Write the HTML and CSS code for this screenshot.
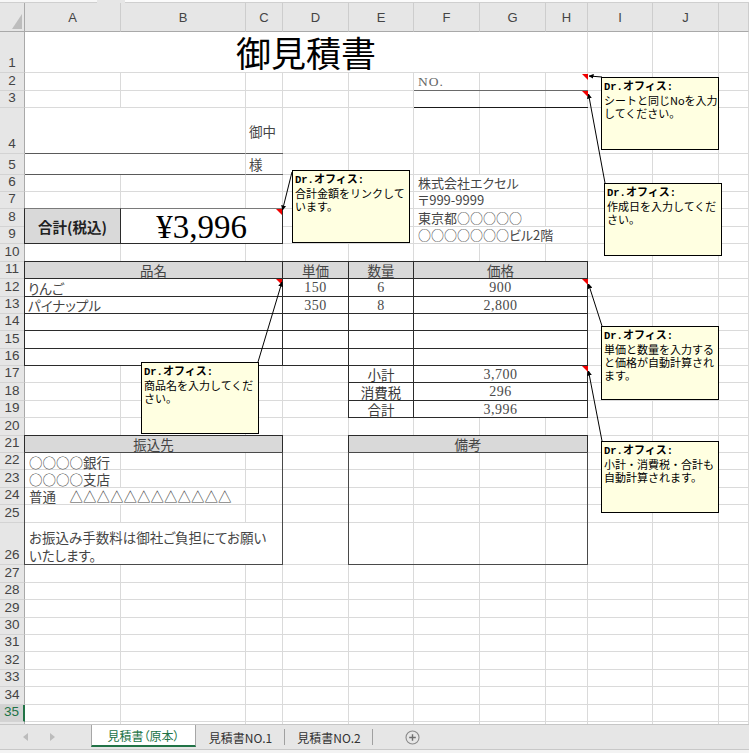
FILE: index.html
```html
<!DOCTYPE html>
<html lang="ja">
<head>
<meta charset="utf-8">
<title>御見積書</title>
<link rel="stylesheet" href="styles.css">
</head>
<body>
<div class="app">
  <div class="fbar"><span class="fb-a"></span><span class="fb-gap"></span><span class="fb-b"></span></div>
  <div class="sheet">
    <div class="gl">
      <div class="corner"></div>
      <div class="ch">A</div><div class="ch">B</div><div class="ch">C</div><div class="ch">D</div><div class="ch">E</div><div class="ch">F</div><div class="ch">G</div><div class="ch">H</div><div class="ch">I</div><div class="ch">J</div><div class="ch"></div>
      <b>1</b><i></i><i></i><i></i><i></i><i></i><i></i><i></i><i></i><i></i><i></i><i></i>
      <b>2</b><i></i><i></i><i></i><i></i><i></i><i></i><i></i><i></i><i></i><i></i><i></i>
      <b>3</b><i></i><i></i><i></i><i></i><i></i><i></i><i></i><i></i><i></i><i></i><i></i>
      <b>4</b><i></i><i></i><i></i><i></i><i></i><i></i><i></i><i></i><i></i><i></i><i></i>
      <b>5</b><i></i><i></i><i></i><i></i><i></i><i></i><i></i><i></i><i></i><i></i><i></i>
      <b>6</b><i></i><i></i><i></i><i></i><i></i><i></i><i></i><i></i><i></i><i></i><i></i>
      <b>7</b><i></i><i></i><i></i><i></i><i></i><i></i><i></i><i></i><i></i><i></i><i></i>
      <b>8</b><i></i><i></i><i></i><i></i><i></i><i></i><i></i><i></i><i></i><i></i><i></i>
      <b>9</b><i></i><i></i><i></i><i></i><i></i><i></i><i></i><i></i><i></i><i></i><i></i>
      <b>10</b><i></i><i></i><i></i><i></i><i></i><i></i><i></i><i></i><i></i><i></i><i></i>
      <b>11</b><i></i><i></i><i></i><i></i><i></i><i></i><i></i><i></i><i></i><i></i><i></i>
      <b>12</b><i></i><i></i><i></i><i></i><i></i><i></i><i></i><i></i><i></i><i></i><i></i>
      <b>13</b><i></i><i></i><i></i><i></i><i></i><i></i><i></i><i></i><i></i><i></i><i></i>
      <b>14</b><i></i><i></i><i></i><i></i><i></i><i></i><i></i><i></i><i></i><i></i><i></i>
      <b>15</b><i></i><i></i><i></i><i></i><i></i><i></i><i></i><i></i><i></i><i></i><i></i>
      <b>16</b><i></i><i></i><i></i><i></i><i></i><i></i><i></i><i></i><i></i><i></i><i></i>
      <b>17</b><i></i><i></i><i></i><i></i><i></i><i></i><i></i><i></i><i></i><i></i><i></i>
      <b>18</b><i></i><i></i><i></i><i></i><i></i><i></i><i></i><i></i><i></i><i></i><i></i>
      <b>19</b><i></i><i></i><i></i><i></i><i></i><i></i><i></i><i></i><i></i><i></i><i></i>
      <b>20</b><i></i><i></i><i></i><i></i><i></i><i></i><i></i><i></i><i></i><i></i><i></i>
      <b>21</b><i></i><i></i><i></i><i></i><i></i><i></i><i></i><i></i><i></i><i></i><i></i>
      <b>22</b><i></i><i></i><i></i><i></i><i></i><i></i><i></i><i></i><i></i><i></i><i></i>
      <b>23</b><i></i><i></i><i></i><i></i><i></i><i></i><i></i><i></i><i></i><i></i><i></i>
      <b>24</b><i></i><i></i><i></i><i></i><i></i><i></i><i></i><i></i><i></i><i></i><i></i>
      <b>25</b><i></i><i></i><i></i><i></i><i></i><i></i><i></i><i></i><i></i><i></i><i></i>
      <b>26</b><i></i><i></i><i></i><i></i><i></i><i></i><i></i><i></i><i></i><i></i><i></i>
      <b>27</b><i></i><i></i><i></i><i></i><i></i><i></i><i></i><i></i><i></i><i></i><i></i>
      <b>28</b><i></i><i></i><i></i><i></i><i></i><i></i><i></i><i></i><i></i><i></i><i></i>
      <b>29</b><i></i><i></i><i></i><i></i><i></i><i></i><i></i><i></i><i></i><i></i><i></i>
      <b>30</b><i></i><i></i><i></i><i></i><i></i><i></i><i></i><i></i><i></i><i></i><i></i>
      <b>31</b><i></i><i></i><i></i><i></i><i></i><i></i><i></i><i></i><i></i><i></i><i></i>
      <b>32</b><i></i><i></i><i></i><i></i><i></i><i></i><i></i><i></i><i></i><i></i><i></i>
      <b>33</b><i></i><i></i><i></i><i></i><i></i><i></i><i></i><i></i><i></i><i></i><i></i>
      <b>34</b><i></i><i></i><i></i><i></i><i></i><i></i><i></i><i></i><i></i><i></i><i></i>
      <b class="sel">35</b><i></i><i></i><i></i><i></i><i></i><i></i><i></i><i></i><i></i><i></i><i></i>
      <b class="last">36</b><i></i><i></i><i></i><i></i><i></i><i></i><i></i><i></i><i></i><i></i><i></i>
    </div>

    <div class="ct">
      <div class="title">御見積書</div>

      <div class="no">NO.</div>
      <div class="nol"></div>

      <div class="m4"></div>
      <div class="tx onchu">御中</div>
      <div class="m5"></div>
      <div class="tx sama">様</div>

      <div class="tx co co1">株式会社エクセル</div>
      <div class="tx co co2">〒999-9999</div>
      <div class="tx co co3">東京都○○○○○</div>
      <div class="tx co co4">○○○○○○○ビル2階</div>

      <div class="bx hd tl">合計(税込)</div>
      <div class="bx tv">¥3,996</div>

      <div class="bx hd r11 cA">品名</div>
      <div class="bx hd r11 cD">単価</div>
      <div class="bx hd r11 cE">数量</div>
      <div class="bx hd r11 cF">価格</div>

      <div class="bx r12 cA tx">りんご</div>
      <div class="bx r12 cD num">150</div>
      <div class="bx r12 cE num">6</div>
      <div class="bx r12 cF num">900</div>

      <div class="bx r13 cA tx">パイナップル</div>
      <div class="bx r13 cD num">350</div>
      <div class="bx r13 cE num">8</div>
      <div class="bx r13 cF num">2,800</div>

      <div class="bx r14 cA"></div><div class="bx r14 cD"></div><div class="bx r14 cE"></div><div class="bx r14 cF"></div>
      <div class="bx r15 cA"></div><div class="bx r15 cD"></div><div class="bx r15 cE"></div><div class="bx r15 cF"></div>
      <div class="bx r16 cA"></div><div class="bx r16 cD"></div><div class="bx r16 cE"></div><div class="bx r16 cF"></div>

      <div class="bx r17 cE lbl">小計</div>
      <div class="bx r17 cF num">3,700</div>
      <div class="bx r18 cE lbl">消費税</div>
      <div class="bx r18 cF num">296</div>
      <div class="bx r19 cE lbl">合計</div>
      <div class="bx r19 cF num">3,996</div>

      <div class="bx hd r21 cA">振込先</div>
      <div class="bx hd r21 cEH">備考</div>

      <div class="tx r22 cA1">○○○○銀行</div>
      <div class="tx r23 cA1">○○○○支店</div>
      <div class="tx r24 cAB ovf">普通　△△△△△△△△△△△△</div>
      <div class="tx r26 cA wrap">お振込み手数料は御社ご負担にてお願い<br>いたします。</div>

      <div class="bx box bank"></div>
      <div class="bx box memo"></div>
    </div>
  </div>

  <div class="tabs">
    <div class="nav">
      <svg class="arr" width="6" height="8" viewBox="0 0 6 8"><path d="M5 0 L0 4 L5 8 Z"/></svg>
      <svg class="arr" width="6" height="8" viewBox="0 0 6 8"><path d="M1 0 L6 4 L1 8 Z"/></svg>
    </div>
    <div class="tab active">見積書（原本）</div>
    <div class="tab sep">見積書NO.1</div>
    <div class="tab sep t3">見積書NO.2</div>
    <div class="add">
      <svg width="15" height="15" viewBox="0 0 15 15"><circle cx="7.5" cy="7.5" r="6.5" fill="none" stroke="#8a8a8a" stroke-width="1.1"/><path d="M7.5 4.2 V10.8 M4.2 7.5 H10.8" stroke="#6f6f6f" stroke-width="1.4"/></svg>
    </div>
  </div>
  <div class="status"></div>

  <svg class="overlay" width="749" height="753" viewBox="0 0 749 753">
    <defs>
      <marker id="ah" viewBox="0 0 6 6" refX="5.5" refY="3" markerWidth="5" markerHeight="5" orient="auto">
        <path d="M0 0 L6 3 L0 6 Z" fill="#000"/>
      </marker>
    </defs>
    <g fill="#f00000">
      <polygon points="582,74 588,74 588,80"/>
      <polygon points="582,91 588,91 588,97"/>
      <polygon points="276,209 282,209 282,215"/>
      <polygon points="276,279 282,279 282,285"/>
      <polygon points="582,279 588,279 588,285"/>
      <polygon points="582,366 588,366 588,372"/>
    </g>
    <g stroke="#000" stroke-width="1" fill="none" marker-end="url(#ah)">
      <line x1="602" y1="77" x2="589" y2="76"/>
      <line x1="605" y1="183" x2="588.5" y2="94"/>
      <line x1="292" y1="172" x2="282.5" y2="210"/>
      <line x1="258" y1="362" x2="282" y2="282"/>
      <line x1="602" y1="326" x2="588.5" y2="284"/>
      <line x1="602" y1="441" x2="588.5" y2="371"/>
    </g>
  </svg>

  <div class="cm cm1"><strong><span class="mono">Dr.</span>オフィス<span class="mono">:</span></strong><br>シートと同じNoを入力<br>してください。</div>
  <div class="cm cm2"><strong><span class="mono">Dr.</span>オフィス<span class="mono">:</span></strong><br>作成日を入力してくだ<br>さい。</div>
  <div class="cm cm3"><strong><span class="mono">Dr.</span>オフィス<span class="mono">:</span></strong><br>合計金額をリンクして<br>います。</div>
  <div class="cm cm4"><strong><span class="mono">Dr.</span>オフィス<span class="mono">:</span></strong><br>商品名を入力してくだ<br>さい。</div>
  <div class="cm cm5"><strong><span class="mono">Dr.</span>オフィス<span class="mono">:</span></strong><br>単価と数量を入力する<br>と価格が自動計算され<br>ます。</div>
  <div class="cm cm6"><strong><span class="mono">Dr.</span>オフィス<span class="mono">:</span></strong><br>小計・消費税・合計も<br>自動計算されます。</div>
</div>
</body>
</html>
```

FILE: styles.css
```css
* { box-sizing: border-box; margin: 0; padding: 0; }

html, body { margin: 0; background: #fff; }

body {
  width: 749px;
  height: 753px;
  overflow: hidden;
  font-family: "Noto Sans CJK JP", "Noto Sans", sans-serif;
}

.app {
  position: relative;
  width: 749px;
  height: 753px;
  display: flex;
  flex-direction: column;
  overflow: hidden;
}

/* bottom edge of formula bar */
.fbar {
  height: 3px;
  flex: none;
  display: flex;
  background: #e6e6e6;
}
.fb-a { width: 97px; background: #f7f7f7; border-bottom: 1px solid #cfcfcf; }
.fb-gap { width: 28px; }
.fb-b { flex: 1; background: #fbfbfb; border-bottom: 1px solid #cfcfcf; }

/* sheet: two stacked grids with identical tracks */
.sheet {
  flex: 1;
  min-height: 0;
  display: grid;
  grid-template: 1fr / 1fr;
  overflow: hidden;
}

.gl, .ct {
  grid-area: 1 / 1;
  display: grid;
  grid-template-columns: 25px 96px 125px 37px 66px 65px 66px 66px 42px 65px 66px 30px;
  grid-template-rows:
    29px
    41px 18px 17px 46px 21px 17px 17px 18px 17px 18px
    17px 18px 17px 17px 18px 17px 17px 18px 17px 18px
    17px 17px 18px 17px 18px 42px 18px 17px 18px 17px
    17px 18px 17px 18px 17px 17px;
  align-content: start;
}

/* grid lines layer */
.corner {
  background: #e6e6e6;
  border-right: 1px solid #a9a9a9;
  border-bottom: 1px solid #a9a9a9;
  display: flex;
  justify-content: flex-end;
  align-items: flex-end;
  padding: 0 2px 2px 0;
}
.corner::after {
  content: "";
  width: 10px;
  height: 15px;
  background: #bdbdbd;
  clip-path: polygon(100% 0, 100% 100%, 0 100%);
}

.ch {
  background: #e6e6e6;
  border-right: 1px solid #cdcdcd;
  border-bottom: 1px solid #a9a9a9;
  font: 13px/16px "Liberation Sans", Arial, sans-serif;
  color: #444;
  display: flex;
  align-items: center;
  justify-content: center;
  padding-top: 1px;
}

.gl > b {
  background: #e6e6e6;
  border-right: 1px solid #a9a9a9;
  border-bottom: 1px solid #d3d3d3;
  font: 13.5px/13px "Liberation Sans", Arial, sans-serif;
  color: #444;
  display: flex;
  align-items: flex-end;
  justify-content: center;
  padding-bottom: 3px;
}
.gl > b.sel {
  background: #d2d2d2;
  color: #217346;
  border-right: 2px solid #217346;
}
.gl > b.last { align-items: flex-start; padding: 0; }

.gl > i {
  border-right: 1px solid #dadada;
  border-bottom: 1px solid #dadada;
}

/* content layer */
.ct > div { min-width: 0; }

.title {
  grid-area: 2 / 2 / 3 / 10;
  background: #fff;
  border-right: 1px solid #dadada;
  border-bottom: 1px solid #dadada;
  display: flex;
  justify-content: center;
  align-items: flex-end;
  font-size: 35px;
  line-height: 40px;
  color: #000;
}

.no {
  grid-area: 3 / 7 / 4 / 10;
  border-bottom: 1px solid #6a6a6a;
  font: 13.5px/16px "Liberation Serif", serif;
  color: #666;
  letter-spacing: 1px;
  padding-left: 4px;
  display: flex;
  align-items: center;
}
.nol {
  grid-area: 4 / 7 / 5 / 10;
  border-bottom: 1px solid #1a1a1a;
}

.m4 { grid-area: 5 / 2 / 6 / 4; background: #fff; border-right: 1px solid #dadada; border-bottom: 1px solid #5a5a5a; }
.m5 { grid-area: 6 / 2 / 7 / 4; background: #fff; border-right: 1px solid #dadada; border-bottom: 1px solid #5a5a5a; }

.tx {
  font-size: 13.5px;
  line-height: 16px;
  color: #454545;
  padding-left: 3px;
  display: flex;
  align-items: center;
  white-space: nowrap;
  font-feature-settings: "palt";
}

.onchu { grid-area: 5 / 4 / 6 / 5; border-bottom: 1px solid #5a5a5a; }
.sama { grid-area: 6 / 4 / 7 / 5; border-bottom: 1px solid #5a5a5a; }

.co {
  background: #fff;
  border-right: 1px solid #dadada;
  border-bottom: 1px solid #dadada;
  padding-left: 4px;
  font-size: 13px;
}
.co1 { grid-area: 7 / 7 / 8 / 9; }
.co2 { grid-area: 8 / 7 / 9 / 9; }
.co3 { grid-area: 9 / 7 / 10 / 9; }
.co4 { grid-area: 10 / 7 / 11 / 10; }

/* bordered cells */
.bx {
  border: 1px solid #2b2b2b;
  margin: -1px 0 0 -1px;
  background: #fff;
}
.hd {
  background: #d9d9d9;
  display: flex;
  align-items: center;
  justify-content: center;
  font-size: 13.5px;
  line-height: 16px;
  color: #444;
}

.tl {
  grid-area: 9 / 2 / 11 / 3;
  border-top-color: #7a7a7a;
  font-weight: 700;
  font-size: 14.5px;
  color: #222;
  padding-top: 2px;
}
.tv {
  grid-area: 9 / 3 / 11 / 5;
  border-top-color: #7a7a7a;
  display: flex;
  align-items: center;
  justify-content: center;
  font: 33px/34px "Liberation Serif", serif;
  color: #000;
  padding-top: 2px;
}

.r11 { grid-row: 12 / 13; }
.r12 { grid-row: 13 / 14; }
.r13 { grid-row: 14 / 15; }
.r14 { grid-row: 15 / 16; }
.r15 { grid-row: 16 / 17; }
.r16 { grid-row: 17 / 18; }
.r17 { grid-row: 18 / 19; }
.r18 { grid-row: 19 / 20; }
.r19 { grid-row: 20 / 21; }
.r21 { grid-row: 22 / 23; }
.r22 { grid-row: 23 / 24; }
.r23 { grid-row: 24 / 25; }
.r24 { grid-row: 25 / 26; }
.r26 { grid-row: 27 / 28; }

.cA { grid-column: 2 / 5; }
.cA1 { grid-column: 2 / 3; }
.cAB { grid-column: 2 / 4; }
.cD { grid-column: 5 / 6; }
.cE { grid-column: 6 / 7; }
.cF { grid-column: 7 / 10; }
.cEH { grid-column: 6 / 10; }

.num {
  display: flex;
  align-items: center;
  justify-content: center;
  font: 14px/16px "Liberation Serif", serif;
  color: #4a4a4a;
  letter-spacing: 0.5px;
  padding-top: 1px;
}

.lbl {
  display: flex;
  align-items: flex-end;
  justify-content: center;
  font-size: 13.5px;
  line-height: 16px;
  color: #3a3a3a;
  background: transparent;
}

.r13.bx { border-bottom-color: #6f6f6f; }

.tx.r22, .tx.r23 { padding-left: 4px; }
.ovf {
  background: #fff;
  border-right: 1px solid #dadada;
  border-bottom: 1px solid #dadada;
  padding-left: 4px;
}
.wrap {
  background: #fff;
  white-space: normal;
  align-items: flex-end;
  line-height: 18px;
  padding: 0 0 1px 4px;
}

.box { background: transparent; }
.bank { grid-area: 23 / 2 / 28 / 5; border-color: #4a4a4a; }
.memo { grid-area: 23 / 6 / 28 / 10; border-color: #4a4a4a; }

/* sheet tabs */
.tabs {
  height: 25px;
  flex: none;
  background: #e6e6e6;
  border-top: 1px solid #c6c6c6;
  display: flex;
  align-items: stretch;
  font-size: 12px;
  font-feature-settings: "palt";
}
.nav {
  width: 91px;
  display: flex;
  align-items: center;
  padding-left: 23px;
  gap: 20px;
}
.arr { fill: #bcbcbc; }
.tab {
  position: relative;
  width: 89px;
  display: flex;
  align-items: center;
  justify-content: center;
  color: #333;
}
.tab.active {
  width: 105px;
  background: #fff;
  border-left: 1px solid #a6a6a6;
  border-right: 1px solid #a6a6a6;
  border-bottom: 2px solid #217346;
  margin-bottom: 2px;
  color: #217346;
}
.tab.t3 { width: 88px; }
.tab.sep::after {
  content: "";
  position: absolute;
  right: 0;
  top: 4px;
  bottom: 4px;
  width: 1px;
  background: #a0a0a0;
}
.add {
  display: flex;
  align-items: center;
  padding-left: 32px;
}

.status {
  height: 4px;
  flex: none;
  background: #f3f3f3;
  border-top: 1px solid #c8c8c8;
}

/* comments overlay */
.overlay {
  position: absolute;
  left: 0;
  top: 0;
  pointer-events: none;
}

.cm {
  position: absolute;
  width: 118px;
  background: #ffffe1;
  border: 1px solid #000;
  padding: 1px 0 0 2px;
  font-family: "Noto Sans CJK JP", sans-serif;
  font-size: 11px;
  line-height: 13px;
  color: #000;
  white-space: nowrap;
  overflow: hidden;
}
.cm strong { font-weight: 700; }
.cm .mono { font-family: "Liberation Mono", monospace; font-size: 10.5px; }
.cm1 { left: 601px; top: 77px; height: 73px; }
.cm2 { left: 604px; top: 183px; height: 73px; }
.cm3 { left: 292px; top: 170px; height: 73px; }
.cm4 { left: 141px; top: 362px; height: 72px; }
.cm5 { left: 601px; top: 326px; height: 74px; }
.cm6 { left: 601px; top: 441px; height: 72px; }
```
